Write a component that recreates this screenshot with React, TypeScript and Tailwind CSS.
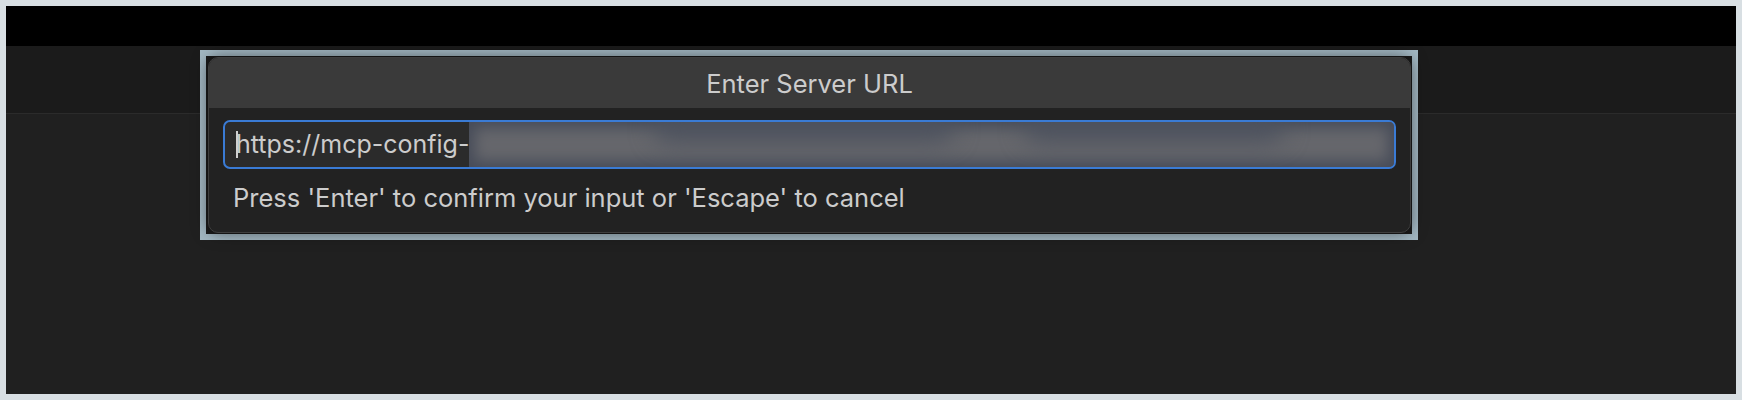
import React from "react";

const QuickInput = () => {
  return (
    <div className="absolute left-[200px] top-[50px] w-[1218px] h-[190px] border-[6px] border-[#a3b8c3] bg-[#1b1b1b] pl-[2px] pr-[1px] pt-[1px] pb-[1px]">
      <div className="flex flex-col h-full rounded-[10px] border border-[#3e3e3e] bg-[#222222] overflow-hidden shadow-[0_0_16px_rgba(0,0,0,0.5)]">
        {/* title */}
        <div className="h-[50px] shrink-0 flex items-center justify-center pt-[3px] bg-[#3a3a3a] text-[#cccccc] text-[25.5px]">
          Enter Server URL
        </div>
        <div className="flex flex-col px-[14px] pt-[12px]">
          <div className="flex items-center h-[49px] rounded-[7px] border-2 border-[#3a7bd5] bg-[#2b2b2b] overflow-hidden">
            <div className="flex items-center h-full pl-[11px]">
              <span className="w-[2px] h-[27px] bg-[#d0d0d0] -mr-[2px]" />
              <span className="text-[#cccccc] text-[25px] leading-none">https://mcp-config-</span>
            </div>
            <div className="relative flex-1 h-full bg-[#66676c] shadow-[inset_0_0_14px_6px_#474c59] overflow-hidden">
              <div className="absolute left-[20%] top-[-10px] w-[300px] h-[30px] rounded-full bg-[#4d525e] blur-[12px]" />
              <div className="absolute left-[60%] top-[-10px] w-[260px] h-[30px] rounded-full bg-[#4d525e] blur-[12px]" />
            </div>
          </div>
          <p className="mt-[16px] pl-[10px] text-[#cccccc] text-[25.5px] leading-none">
            Press 'Enter' to confirm your input or 'Escape' to cancel
          </p>
        </div>
      </div>
    </div>
  );
};

const App = () => {
  return (
    <div
      className="w-[1742px] h-[400px] bg-[#d8dfe3] p-[6px]"
      style={{ fontFamily: "Inter, 'Noto Sans', sans-serif" }}
    >
      <div className="relative flex flex-col h-full bg-[#202020] overflow-hidden">
        <div className="h-[40px] bg-black shrink-0" />
        <div className="h-[68px] bg-[#1b1b1b] border-b border-[#2b2b2b] shrink-0" />
        <div className="flex-1 bg-[#202020]" />
      </div>
      <QuickInput />
    </div>
  );
};

export default App;
